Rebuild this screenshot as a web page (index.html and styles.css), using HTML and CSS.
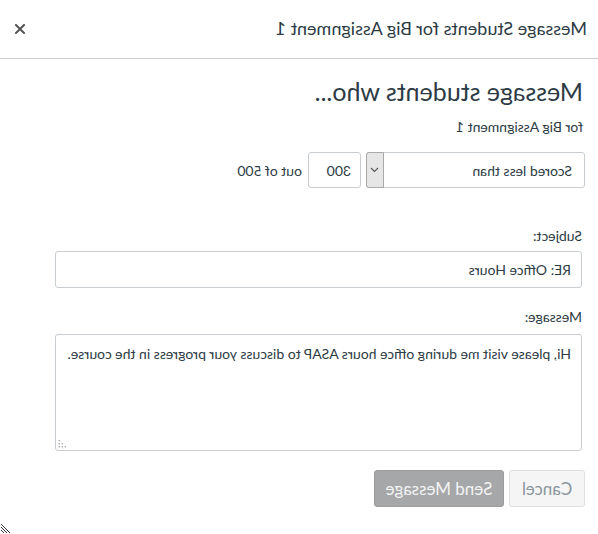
FILE: index.html
```html
<!DOCTYPE html>
<html lang="en">
<head>
<meta charset="utf-8">
<title>Message Students</title>
<link rel="stylesheet" href="styles.css">
</head>
<body>
<div class="mirror">
  <div class="dialog">
    <header class="titlebar">
      <span class="title">Message Students for Big Assignment 1</span>
      <button class="close" aria-label="Close">
        <svg width="10" height="10" viewBox="0 0 10 10"><path d="M1 1 L9 9 M9 1 L1 9" stroke="#555" stroke-width="2" stroke-linecap="square"/></svg>
      </button>
    </header>
    <main class="content">
      <h1 class="heading">Message students who...</h1>
      <p class="sub">for Big Assignment 1</p>
      <div class="criteria">
        <div class="select">
          <span class="select-text">Scored less than</span>
          <span class="select-arrow">
            <svg width="9" height="6" viewBox="0 0 9 6"><path d="M1 1 L4.5 4.5 L8 1" fill="none" stroke="#555" stroke-width="1.1"/></svg>
          </span>
        </div>
        <div class="num">300</div>
        <span class="outof">out of 500</span>
      </div>
      <label class="label label-subject">Subject:</label>
      <div class="input">RE: Office Hours</div>
      <label class="label label-message">Message:</label>
      <div class="textarea">
        <span>Hi, please visit me during office hours ASAP to discuss your progress in the course.</span>
        <svg class="grip" width="8" height="8" viewBox="0 0 8 8">
          <rect x="6" y="0" width="1.4" height="1.4" fill="#aaa"/>
          <rect x="3" y="3" width="1.4" height="1.4" fill="#aaa"/>
          <rect x="6" y="3" width="1.4" height="1.4" fill="#aaa"/>
          <rect x="0" y="6" width="1.4" height="1.4" fill="#aaa"/>
          <rect x="3" y="6" width="1.4" height="1.4" fill="#aaa"/>
          <rect x="6" y="6" width="1.4" height="1.4" fill="#aaa"/>
        </svg>
      </div>
      <div class="actions">
        <button class="btn btn-cancel">Cancel</button>
        <button class="btn btn-send">Send Message</button>
      </div>
    </main>
    <svg class="resize" width="12" height="12" viewBox="0 0 12 12">
      <path d="M11 2 L2 11 M11 5 L5 11 M11 8 L8 11" stroke="#333" stroke-width="1" fill="none"/>
    </svg>
  </div>
</div>
</body>
</html>
```

FILE: styles.css
```css
html, body {
  margin: 0;
  padding: 0;
  background: #fff;
}
body {
  font-family: Lato, "Liberation Sans", sans-serif;
  color: #2d3b45;
  width: 598px;
  height: 534px;
  overflow: hidden;
}
.mirror {
  width: 598px;
  height: 534px;
  transform: scaleX(-1);
}
.dialog {
  position: relative;
  width: 598px;
  height: 534px;
}
.titlebar {
  height: 58px;
  border-bottom: 1px solid #c7cdd1;
  display: flex;
  align-items: center;
  justify-content: space-between;
  padding: 0 14px 0 11px;
  box-sizing: content-box;
}
.title {
  font-size: 18px;
  color: #2d3b45;
  margin-top: -3px;
}
.close {
  border: 0;
  background: none;
  padding: 0;
  width: 12px;
  height: 12px;
  display: flex;
  align-items: center;
  justify-content: center;
  margin-top: -1px;
}
.content {
  padding: 0 13px;
}
.heading {
  font-size: 25px;
  font-weight: 400;
  margin: 16px 0 0 2px;
  line-height: 32px;
}
.sub {
  font-size: 14px;
  margin: 11px 0 0 2px;
  line-height: 17px;
}
.criteria {
  display: flex;
  align-items: center;
  margin-top: 17px;
}
.select {
  width: 219px;
  height: 36px;
  box-sizing: border-box;
  border: 1px solid #c7cdd1;
  border-radius: 3px;
  display: flex;
  align-items: stretch;
  font-size: 14px;
}
.select-text {
  flex: 1;
  display: flex;
  align-items: center;
  padding-left: 12px;
}
.select-arrow {
  width: 16px;
  background: #e6e6e6;
  border: 1px solid #a9a9a9;
  margin: -1px;
  border-radius: 0 3px 3px 0;
  display: flex;
  align-items: center;
  justify-content: center;
}
.num {
  margin-left: 5px;
  width: 53px;
  height: 36px;
  box-sizing: border-box;
  border: 1px solid #c7cdd1;
  border-radius: 3px;
  font-size: 14px;
  display: flex;
  align-items: center;
  padding-left: 9px;
}
.outof {
  margin-left: 6px;
  font-size: 14px;
}
.label {
  display: block;
  font-size: 14px;
  line-height: 16px;
  margin-left: 3px;
}
.label-subject {
  margin-top: 40px;
}
.label-message {
  margin-top: 21px;
}
.input {
  margin: 7px 0 0 3px;
  width: 527px;
  height: 37px;
  box-sizing: border-box;
  border: 1px solid #c7cdd1;
  border-radius: 3px;
  font-size: 14px;
  display: flex;
  align-items: center;
  padding-left: 10px;
}
.textarea {
  position: relative;
  margin: 9px 0 0 3px;
  width: 527px;
  height: 117px;
  box-sizing: border-box;
  border: 1px solid #c7cdd1;
  border-radius: 3px;
  font-size: 14px;
  padding: 10px 10px;
  line-height: 17px;
}
.grip {
  position: absolute;
  right: 2px;
  bottom: 2px;
}
.actions {
  display: flex;
  gap: 5px;
  margin-top: 19px;
}
.btn {
  height: 37px;
  box-sizing: border-box;
  border-radius: 3px;
  font-family: Lato, "Liberation Sans", sans-serif;
  font-size: 17px;
  padding: 0;
}
.btn-cancel {
  width: 76px;
  background: #f5f5f5;
  border: 1px solid #dde1e3;
  color: #8b969e;
}
.btn-send {
  width: 130px;
  background: #a6a7a9;
  border: 1px solid #9b9c9e;
  color: #f3f3f3;
}
.resize {
  position: absolute;
  right: 0;
  bottom: 0;
}
```
